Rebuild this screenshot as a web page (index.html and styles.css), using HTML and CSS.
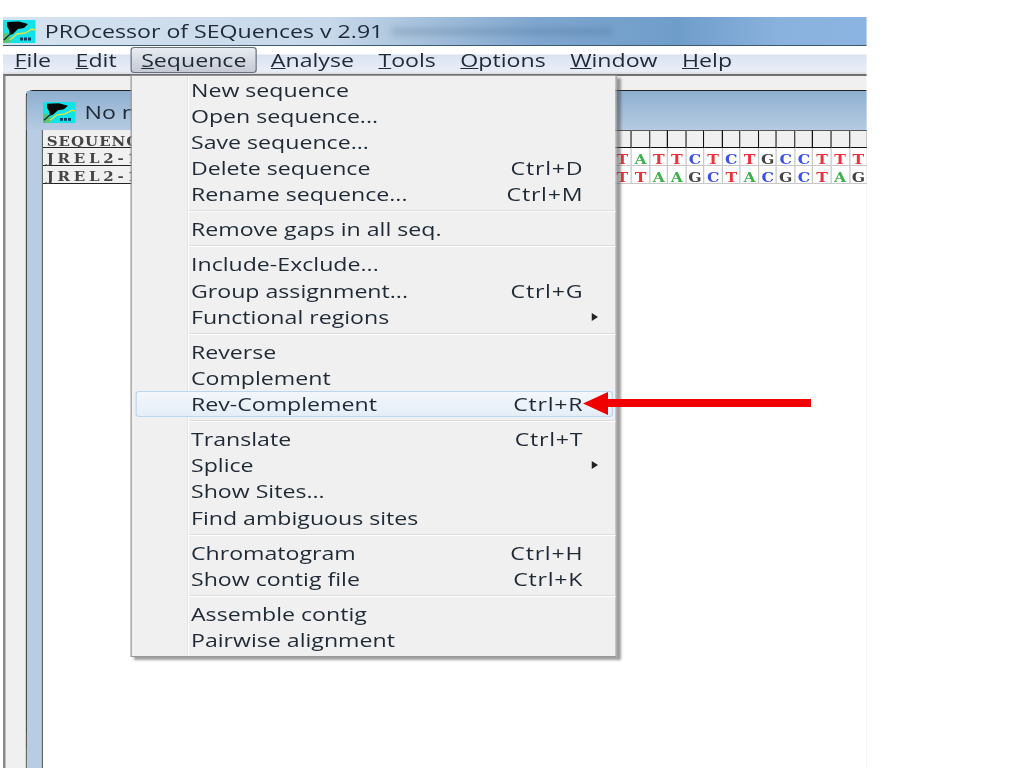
FILE: index.html
```html
<!DOCTYPE html>
<html lang="en">
<head>
<meta charset="utf-8">
<title>PROcessor of SEQuences v 2.91</title>
<link rel="stylesheet" href="styles.css">
</head>
<body>
<svg class="defs" width="0" height="0" aria-hidden="true">
  <symbol id="logo" viewBox="0 0 33 23" preserveAspectRatio="none">
    <rect width="33" height="23" fill="#12e2ea"/>
    <path d="M0 23V14L4 12L9 20L6 23Z" fill="#58c878"/>
    <path d="M4 2L16 1.5L25 4L21 8L15 9L10 14L7 15L6 10L4 6Z" fill="#080808"/>
    <path d="M1 20L8 13" stroke="#103028" stroke-width="1.4" fill="none"/>
    <path d="M7 20L14 14L22 13L29 9L32 10" stroke="#e6e23c" stroke-width="1.4" fill="none"/>
    <path d="M17 19h3M21 19h3M25 19h3" stroke="#123a60" stroke-width="3" fill="none"/>
  </symbol>
</svg>
<div class="app">
  <header class="titlebar">
    <svg class="logo"><use href="#logo"/></svg>
    <span class="title">PROcessor of SEQuences v 2.91</span>
    <span class="smudge"></span>
  </header>
  <nav class="menubar">
    <span class="mi"><u>F</u>ile</span>
    <span class="mi"><u>E</u>dit</span>
    <span class="mi open"><u>S</u>equence</span>
    <span class="mi"><u>A</u>nalyse</span>
    <span class="mi"><u>T</u>ools</span>
    <span class="mi"><u>O</u>ptions</span>
    <span class="mi"><u>W</u>indow</span>
    <span class="mi"><u>H</u>elp</span>
  </nav>
  <main class="mdi">
    <section class="child">
      <div class="child-title">
        <svg class="logo small"><use href="#logo"/></svg>
        <span class="title">No name</span>
      </div>
      <div class="grid">
        <div class="name head">SEQUENCE</div>
        <div class="hc"></div><div class="hc"></div><div class="hc"></div><div class="hc"></div><div class="hc"></div><div class="hc"></div><div class="hc"></div><div class="hc"></div><div class="hc"></div><div class="hc"></div><div class="hc"></div><div class="hc"></div><div class="hc"></div><div class="hc"></div>
        <div class="name">JREL2-1</div>
        <div class="b t">T</div><div class="b a">A</div><div class="b t">T</div><div class="b t">T</div><div class="b c">C</div><div class="b t">T</div><div class="b c">C</div><div class="b t">T</div><div class="b g">G</div><div class="b c">C</div><div class="b c">C</div><div class="b t">T</div><div class="b t">T</div><div class="b t">T</div>
        <div class="name">JREL2-1</div>
        <div class="b t">T</div><div class="b t">T</div><div class="b a">A</div><div class="b a">A</div><div class="b g">G</div><div class="b c">C</div><div class="b t">T</div><div class="b a">A</div><div class="b c">C</div><div class="b g">G</div><div class="b c">C</div><div class="b t">T</div><div class="b a">A</div><div class="b g">G</div>
      </div>
    </section>
  </main>
  <div class="menu">
    <div class="it"><span>New sequence</span></div>
    <div class="it"><span>Open sequence...</span></div>
    <div class="it"><span>Save sequence...</span></div>
    <div class="it"><span>Delete sequence</span><span class="key">Ctrl+D</span></div>
    <div class="it"><span>Rename sequence...</span><span class="key">Ctrl+M</span></div>
    <div class="sep"></div>
    <div class="it"><span>Remove gaps in all seq.</span></div>
    <div class="sep"></div>
    <div class="it"><span>Include-Exclude...</span></div>
    <div class="it"><span>Group assignment...</span><span class="key">Ctrl+G</span></div>
    <div class="it"><span>Functional regions</span><i class="sub"></i></div>
    <div class="sep"></div>
    <div class="it"><span>Reverse</span></div>
    <div class="it"><span>Complement</span></div>
    <div class="it hot"><span>Rev-Complement</span><span class="key">Ctrl+R</span></div>
    <div class="sep"></div>
    <div class="it"><span>Translate</span><span class="key">Ctrl+T</span></div>
    <div class="it"><span>Splice</span><i class="sub"></i></div>
    <div class="it"><span>Show Sites...</span></div>
    <div class="it"><span>Find ambiguous sites</span></div>
    <div class="sep"></div>
    <div class="it"><span>Chromatogram</span><span class="key">Ctrl+H</span></div>
    <div class="it"><span>Show contig file</span><span class="key">Ctrl+K</span></div>
    <div class="sep"></div>
    <div class="it"><span>Assemble contig</span></div>
    <div class="it"><span>Pairwise alignment</span></div>
  </div>
  <svg class="arrow" viewBox="0 0 228 23" preserveAspectRatio="none" aria-hidden="true">
    <path d="M0 11.5L25 0V7H228V15H25V23Z" fill="#f00000"/>
  </svg>
</div>
</body>
</html>
```
FILE: styles.css
```css
html, body {
  margin: 0;
  height: 100%;
  background: #fff;
  overflow: hidden;
}
.defs { position: absolute; }
.app {
  position: absolute;
  left: 3px;
  top: 17px;
  width: 691.2px;
  height: 751px;
  transform: scaleX(1.25);
  transform-origin: 0 0;
  filter: blur(0.35px);
  display: flex;
  flex-direction: column;
  overflow: hidden;
  font-family: "Open Sans", "Liberation Sans", sans-serif;
  font-size: 18.5px;
  color: #1f2a36;
  background: #fff;
}
.titlebar {
  flex: none;
  height: 28px;
  display: flex;
  align-items: center;
  border-bottom: 1px solid #3d5a72;
  background: linear-gradient(90deg, #d6e3f0 0%, #c6d8ea 38%, #a8c2dc 48%, #7ea6cf 62%, #6f9dca 78%, #8ab2de 90%, #8cb4e2 100%);
}
.logo { width: 26.4px; height: 23px; flex: none; }
.logo.small { height: 21px; }
.title { margin-left: 7px; white-space: nowrap; line-height: 24px; }
.smudge {
  margin-left: 7px;
  width: 176px;
  height: 7px;
  background: rgba(50, 80, 120, .22);
  filter: blur(3px);
}
.menubar {
  flex: none;
  height: 28px;
  display: flex;
  align-items: center;
  gap: 2.4px;
  padding-left: 0.6px;
  background: linear-gradient(180deg, #fff 0 28%, #dbe3f2 32%, #e9edf7 90%, #d8dade 100%);
}
.mi {
  padding: 0 7.6px;
  line-height: 24px;
  border: 1px solid transparent;
  border-radius: 3px;
  white-space: nowrap;
}
.mi.open {
  border-color: #66717d;
  background: linear-gradient(180deg, #e9edf3, #c4c9d3);
}
.mdi {
  flex: 1;
  min-height: 0;
  display: flex;
  flex-direction: column;
  padding: 14px 0 0 16px;
  border-top: 2px solid #6f6f6f;
  border-left: 2.4px solid #8a8a8a;
  background: #f0f0f0;
}
.child {
  flex: 1;
  display: flex;
  flex-direction: column;
  border-top: 1px solid #222;
  border-left: 1.6px solid #111;
  border-top-left-radius: 6px;
  background: linear-gradient(90deg, #b6cde4 12px, #fff 12px);
}
.child-title {
  flex: none;
  height: 39px;
  display: flex;
  align-items: center;
  padding: 3px 0 0 12.8px;
  box-sizing: border-box;
  background: linear-gradient(180deg, #8fafd0, #b5cbe2);
}
.grid {
  flex: 1;
  margin-left: 12px;
  display: grid;
  grid-template-columns: 456.8px repeat(14, 14.52px);
  grid-auto-rows: 18px;
  align-content: start;
  border-left: 1.6px solid #666;
}
.name {
  font-family: "DejaVu Serif", "Liberation Serif", serif;
  font-weight: 700;
  font-size: 12px;
  line-height: 22px;
  letter-spacing: 3px;
  padding-left: 3px;
  border-bottom: 1.5px solid #222;
  background: #f0f0f0;
  box-sizing: border-box;
  color: #444;
}
.name.head { letter-spacing: 0.8px; line-height: 24px; }
.hc {
  background: #f0f0f0;
  border-top: 1px solid #555;
  border-right: 1.6px solid #111;
  border-bottom: 1.5px solid #111;
  box-sizing: border-box;
}
.b {
  font-family: "DejaVu Serif", "Liberation Serif", serif;
  font-weight: 700;
  font-size: 12.5px;
  line-height: 24px;
  text-align: center;
  border-right: 1px solid #c8c8c8;
  border-bottom: 1px solid #c8c8c8;
  box-sizing: border-box;
}
.t { color: #ee3038; }
.a { color: #3cb04a; }
.c { color: #3a50e8; }
.g { color: #444; }
.menu {
  position: absolute;
  left: 102.4px;
  top: 58px;
  width: 388.8px;
  box-sizing: border-box;
  padding: 0.5px 0 2.5px;
  border: 1px solid #979797;
  border-width: 1px 1.2px;
  box-shadow: 3px 3px 2px rgba(80, 80, 80, .55);
  background: linear-gradient(90deg, #f0f0f0 0 44px, #e2e3e3 44px 45px, #fff 45px 46px, #f0f0f0 46px);
}
.it {
  height: 26.2px;
  line-height: 26px;
  display: flex;
  justify-content: space-between;
  align-items: center;
  padding: 0 26px 0 47px;
  box-sizing: border-box;
  white-space: nowrap;
  position: relative;
}
.key { letter-spacing: 0.6px; }
.it.hot::before {
  content: "";
  position: absolute;
  inset: 0 2.5px;
  border: 1px solid #bcd6f0;
  border-radius: 3px;
  background: linear-gradient(180deg, #f4f7fb, #e4edf7);
}
.it.hot span { position: relative; }
.sub {
  margin-right: -12px;
  border-left: 5px solid #222;
  border-top: 4px solid transparent;
  border-bottom: 4px solid transparent;
}
.sep {
  height: 8.8px;
  margin-left: 46px;
  box-sizing: border-box;
  border-top: 3.8px solid transparent;
  background: linear-gradient(180deg, #dcdcdc 0 1px, #fff 1px 2px, transparent 2px);
  background-clip: padding-box;
}
.arrow {
  position: absolute;
  left: 464.2px;
  top: 375px;
  width: 182.4px;
  height: 23px;
}
```
